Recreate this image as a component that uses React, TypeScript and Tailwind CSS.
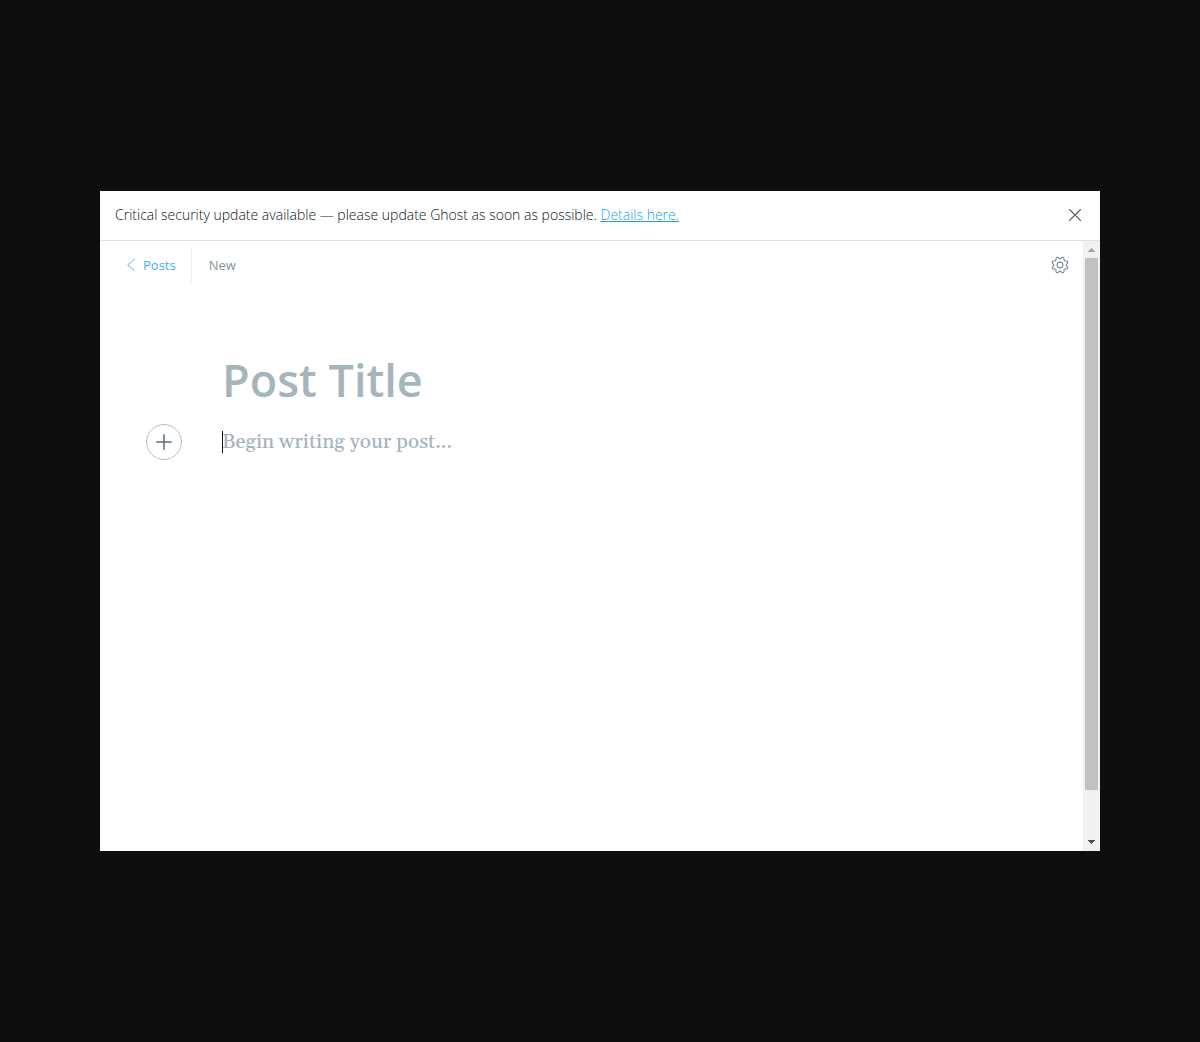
import React from 'react';

function CloseIcon() {
  return (
    <svg width="12" height="12" viewBox="0 0 12 12" fill="none" stroke="#54666d" strokeWidth="1.1" strokeLinecap="round" aria-hidden="true">
      <path d="M0.5 0.5L11.5 11.5M11.5 0.5L0.5 11.5" />
    </svg>
  );
}

function BackIcon() {
  return (
    <svg width="8" height="12" viewBox="0 0 8 12" fill="none" stroke="#3eb0ef" strokeWidth="0.8" strokeLinecap="round" strokeLinejoin="round" aria-hidden="true">
      <path d="M7.5 0.5L0.7 6L7.5 11.5" />
    </svg>
  );
}

function GearIcon() {
  return (
    <svg width="18" height="18" viewBox="-1 -1 26 26" fill="none" stroke="#738a94" strokeWidth="1.6" strokeLinecap="round" strokeLinejoin="round" aria-hidden="true">
      <path d="M10.546 2.438a1.957 1.957 0 0 0 2.908 0L14.4 1.4a1.959 1.959 0 0 1 3.41 1.413l-.071 1.4A1.958 1.958 0 0 0 19.79 6.264l1.4-.071A1.959 1.959 0 0 1 22.6 9.6l-1.04.943a1.96 1.96 0 0 0 0 2.909l1.04.943a1.959 1.959 0 0 1-1.413 3.41l-1.4-.071a1.958 1.958 0 0 0-2.056 2.056l.071 1.4A1.959 1.959 0 0 1 14.4 22.6l-.941-1.041a1.959 1.959 0 0 0-2.908 0L9.606 22.6A1.959 1.959 0 0 1 6.2 21.192l.072-1.4a1.958 1.958 0 0 0-2.056-2.056l-1.4.071A1.958 1.958 0 0 1 1.4 14.4l1.041-.943a1.96 1.96 0 0 0 0-2.909L1.4 9.606A1.958 1.958 0 0 1 2.81 6.193l1.4.071A1.958 1.958 0 0 0 6.264 4.21L6.193 2.812A1.959 1.959 0 0 1 9.606 1.4Z" />
      <circle cx="12" cy="12" r="4.2" />
    </svg>
  );
}

function PlusIcon() {
  return (
    <svg width="16" height="16" viewBox="0 0 16 16" fill="none" stroke="#5c7079" strokeWidth="1.5" strokeLinecap="round" aria-hidden="true">
      <path d="M8 0.8V15.2M0.8 8H15.2" />
    </svg>
  );
}

function Banner() {
  return (
    <div className="flex items-center justify-between border-b border-[#dfe1e3] px-[15px] pt-3 pb-[13px]">
      <p className="text-sm leading-6 font-light text-[#0b1418]">
        Critical security update available — please update Ghost as soon as possible.{' '}
        <a href="#details" className="text-[#1a9fe8] underline">Details here.</a>
      </p>
      <button type="button" aria-label="Close" className="flex h-5 w-5 items-center justify-center">
        <CloseIcon />
      </button>
    </div>
  );
}

function EditorHeader() {
  return (
    <header className="flex items-center justify-between py-1.5 pr-3.5 pl-[27px]">
      <nav className="flex items-center text-[13px] leading-9">
        <a href="#posts" className="flex items-center gap-2 border-r border-[#e5eff5] pr-[15px] text-[#3eb0ef]">
          <BackIcon />
          Posts
        </a>
        <span className="pl-[17px] text-[#7f949d]">New</span>
      </nav>
      <button type="button" aria-label="Settings">
        <GearIcon />
      </button>
    </header>
  );
}

function Editor() {
  return (
    <main className="flex flex-col pt-[61px] pr-[105px] pl-[46px]">
      <input
        aria-label="Post title"
        placeholder="Post Title"
        className="ml-[76px] h-[60px] font-['Open_Sans','Noto_Sans',sans-serif] text-[45px] font-semibold outline-none placeholder:text-[#a6b5bc] placeholder:opacity-100"
      />
      <div className="mt-3.5 flex items-center gap-10">
        <button
          type="button"
          aria-label="Add a card"
          className="flex h-9 w-9 shrink-0 items-center justify-center rounded-full border border-[#afc0c8]"
        >
          <PlusIcon />
        </button>
        <div className="relative flex flex-1 items-center">
          <input
            aria-label="Post content"
            placeholder="Begin writing your post..."
            className="h-9 w-full font-['Gelasio','Georgia','Noto_Serif','DejaVu_Serif',serif] text-xl font-medium outline-none placeholder:text-[#a6b5bc] placeholder:opacity-100"
          />
          <span className="absolute left-0 h-[22px] w-px bg-[#15171a]" />
        </div>
      </div>
    </main>
  );
}

function Scrollbar() {
  return (
    <div className="flex w-[17px] flex-col items-center bg-[#f1f1f1]" aria-hidden="true">
      <div className="flex h-[17px] items-center justify-center">
        <svg width="7" height="4" viewBox="0 0 7 4" fill="#a3a3a3" shapeRendering="crispEdges">
          <path d="M3 0H4V1H5V2H6V3H7V4H0V3H1V2H2V1H3Z" />
        </svg>
      </div>
      <div className="w-[13px] grow-[532] bg-[#c1c1c1]" />
      <div className="grow-[44]" />
      <div className="flex h-[17px] items-start justify-center pt-1.5">
        <svg width="7" height="4" viewBox="0 0 7 4" fill="#505050" shapeRendering="crispEdges">
          <path d="M0 0H7V1H6V2H5V3H4V4H3V3H2V2H1V1H0Z" />
        </svg>
      </div>
    </div>
  );
}

export default function App() {
  return (
    <div className="flex min-h-screen bg-[#0e0e0e] px-[100px] py-[191px] font-['Open_Sans','Noto_Sans',sans-serif]">
      <div className="flex flex-1 flex-col bg-white">
        <Banner />
        <div className="flex flex-1">
          <div className="flex-1">
            <EditorHeader />
            <Editor />
          </div>
          <Scrollbar />
        </div>
      </div>
    </div>
  );
}
